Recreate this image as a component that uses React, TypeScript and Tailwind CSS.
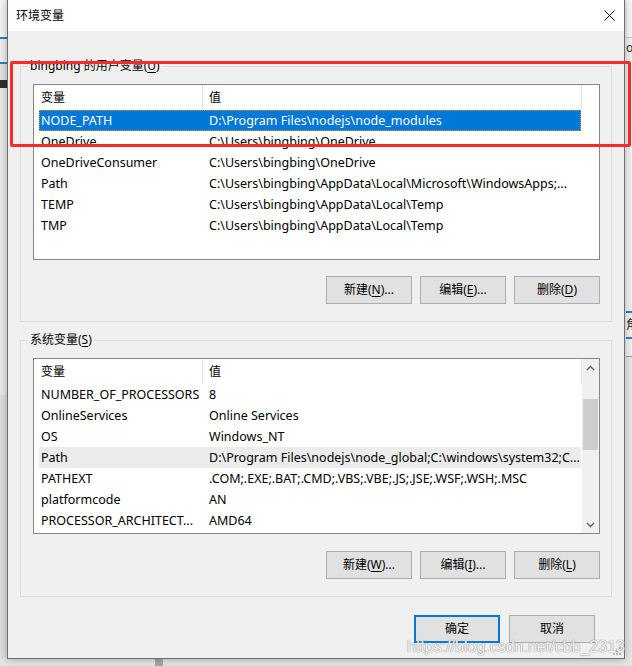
import React from "react";

type Row = [string, string];

const USER_VARS: Row[] = [
  ["NODE_PATH", "D:\\Program Files\\nodejs\\node_modules"],
  ["OneDrive", "C:\\Users\\bingbing\\OneDrive"],
  ["OneDriveConsumer", "C:\\Users\\bingbing\\OneDrive"],
  ["Path", "C:\\Users\\bingbing\\AppData\\Local\\Microsoft\\WindowsApps;..."],
  ["TEMP", "C:\\Users\\bingbing\\AppData\\Local\\Temp"],
  ["TMP", "C:\\Users\\bingbing\\AppData\\Local\\Temp"],
];

const SYS_VARS: Row[] = [
  ["NUMBER_OF_PROCESSORS", "8"],
  ["OnlineServices", "Online Services"],
  ["OS", "Windows_NT"],
  ["Path", "D:\\Program Files\\nodejs\\node_global;C:\\windows\\system32;C..."],
  ["PATHEXT", ".COM;.EXE;.BAT;.CMD;.VBS;.VBE;.JS;.JSE;.WSF;.WSH;.MSC"],
  ["platformcode", "AN"],
  ["PROCESSOR_ARCHITECT...", "AMD64"],
];

function Key({ pre, k, post }: { pre: string; k: string; post: string }) {
  return (
    <span className="whitespace-nowrap">
      {pre}
      <span className="underline underline-offset-2">{k}</span>
      {post}
    </span>
  );
}

function WinButton({ pre, k, post, primary }: { pre: string; k?: string; post?: string; primary?: boolean }) {
  return (
    <button
      className={
        "w-[86px] h-[28px] shrink-0 flex items-center justify-center bg-[#e1e1e1] text-[12px] text-black " +
        (primary ? "border-2 border-[#0078d7]" : "border border-[#adadad]")
      }
    >
      {k ? <Key pre={pre} k={k} post={post || ""} /> : pre}
    </button>
  );
}

function ListView({ rows, selected, hover, scroll }: { rows: Row[]; selected?: number; hover?: number; scroll?: boolean }) {
  return (
    <div className="h-[176px] border border-[#828790] bg-white flex overflow-hidden">
      <div className="w-[548px] shrink-0 flex flex-col">
        <div className="h-[25px] flex shrink-0 text-[12px]">
          <div className="w-[169px] border-r border-[#e5e5e5] pl-[7px] flex items-center">变量</div>
          <div className="w-[379px] border-r border-[#e5e5e5] pl-[6px] flex items-center">值</div>
        </div>
        {rows.map(([name, value], i) => (
          <div
            key={name}
            className={
              "ml-[5px] w-[542px] h-[21px] shrink-0 flex items-center pt-[1px] whitespace-nowrap " +
              (i === selected
                ? "bg-[#0078d7] text-white outline-1 outline-dotted outline-[#e08a2e] -outline-offset-1"
                : i === hover
                ? "bg-[#ececec]"
                : "")
            }
          >
            <div className="w-[170px] shrink-0 pl-[2px] pr-[2px] overflow-hidden">{name}</div>
            <div className="flex-1 min-w-0 overflow-hidden">{value}</div>
          </div>
        ))}
      </div>
      {scroll ? (
        <div className="w-[17px] shrink-0 bg-[#f0f0f0] flex flex-col">
          <div className="h-[17px] flex items-center justify-center">
            <svg width="9" height="6" viewBox="0 0 9 6">
              <polyline points="1,5 4.5,1.5 8,5" fill="none" stroke="#606060" strokeWidth="1.3" />
            </svg>
          </div>
          <div className="flex-1 flex flex-col">
            <div className="h-[23px]" />
            <div className="h-[51px] mx-[1px] bg-[#cdcdcd]" />
          </div>
          <div className="h-[17px] flex items-center justify-center">
            <svg width="9" height="6" viewBox="0 0 9 6">
              <polyline points="1,1 4.5,4.5 8,1" fill="none" stroke="#606060" strokeWidth="1.3" />
            </svg>
          </div>
        </div>
      ) : (
        <div className="flex-1" />
      )}
    </div>
  );
}

function GroupBox({
  legend,
  rows,
  selected,
  hover,
  scroll,
  buttons,
  gap,
  className,
}: {
  legend: React.ReactNode;
  rows: Row[];
  selected?: number;
  hover?: number;
  scroll?: boolean;
  buttons: [string, string, string][];
  gap: string;
  className?: string;
}) {
  return (
    <fieldset className={"border border-[#dcdcdc] " + (className || "")}>
      <legend className="ml-[7px] px-[2px] leading-[16px] text-[12px]">{legend}</legend>
      <div className="pt-[10px] pl-[12px] pr-[11px] pb-[17px] flex flex-col">
        <ListView rows={rows} selected={selected} hover={hover} scroll={scroll} />
        <div className={"flex justify-end gap-[8px] " + gap}>
          {buttons.map(([a, b, c]) => (
            <WinButton key={a} pre={a} k={b} post={c} />
          ))}
        </div>
      </div>
    </fieldset>
  );
}

export default function App() {
  return (
    <div className="w-[632px] h-[666px] relative overflow-hidden bg-[#e6e6e6] flex flex-col font-['Noto_Sans','Noto_Sans_CJK_SC',sans-serif] text-[12.5px] text-black">
      <div className="h-[659px] flex">
        {/* window behind, left edge */}
        <div className="w-[7px] shrink-0 flex flex-col bg-[#ececec]">
          <div className="h-[37px] bg-[#f4f4f4]" />
          <div className="h-[2px] bg-[#2b7fd0]" />
          <div className="h-[23px] bg-[#eeeeee]" />
          <div className="h-[2px] bg-[#2b7fd0]" />
          <div className="h-[16px] bg-[#e2e2e2]" />
          <div className="h-[8px] bg-[#2f2f2f]" />
          <div className="h-[307px] bg-[#e9e9e9]" />
          <div className="flex-1 bg-[#dedede]" />
        </div>

        {/* dialog */}
        <div className="w-[618px] shrink-0 relative flex flex-col bg-[#f0f0f0] border-x border-b border-[#6e6e6e] shadow-[0_0_8px_rgba(0,0,0,0.3)]">
          <div className="h-[31px] bg-white flex items-center justify-between pl-[8px] pr-[9px] shrink-0 text-[12px]">
            <span>环境变量</span>
            <svg width="11" height="11" viewBox="0 0 11 11">
              <path d="M0.5 0.5 L10.5 10.5 M10.5 0.5 L0.5 10.5" stroke="#111" strokeWidth="1" />
            </svg>
          </div>

          <div className="px-[12px] pt-[27px] flex flex-col">
            <GroupBox
              legend={<Key pre="bingbing 的用户变量(" k="U" post=")" />}
              rows={USER_VARS}
              selected={0}
              gap="mt-[16px]"
              buttons={[
                ["新建(", "N", ")..."],
                ["编辑(", "E", ")..."],
                ["删除(", "D", ")"],
              ]}
            />
            <GroupBox
              className="mt-[10px]"
              legend={<Key pre="系统变量(" k="S" post=")" />}
              rows={SYS_VARS}
              hover={3}
              scroll
              gap="mt-[17px]"
              buttons={[
                ["新建(", "W", ")..."],
                ["编辑(", "I", ")..."],
                ["删除(", "L", ")"],
              ]}
            />
          </div>

          <div className="mt-[18px] flex justify-end gap-[9px] pr-[29px]">
            <WinButton pre="确定" primary />
            <WinButton pre="取消" />
          </div>

          {/* resize grip */}
          <svg className="absolute right-[2px] bottom-[2px]" width="10" height="10" viewBox="0 0 10 10">
            {[
              [8, 2],
              [8, 5],
              [5, 5],
              [8, 8],
              [5, 8],
              [2, 8],
            ].map(([x, y]) => (
              <rect key={x + "-" + y} x={x - 1} y={y - 1} width="2" height="2" fill="#b8b8b8" />
            ))}
          </svg>
        </div>

        {/* window behind, right edge */}
        <div className="flex-1 min-w-0 overflow-hidden flex flex-col bg-[#f2f2f2] pl-[1px]">
          <div className="h-[37px] bg-[#f7f7f7]" />
          <div className="h-[1px] bg-[#c8c8c8]" />
          <div className="h-[20px] text-[12px] leading-[20px] overflow-hidden text-[#333]">o</div>
          <div className="h-[253px]" />
          <div className="h-[2px] bg-[#2b7fd0]" />
          <div className="h-[24px] text-[12px] leading-[24px] overflow-hidden text-[#222]">角</div>
          <div className="h-[2px] bg-[#2b7fd0]" />
          <div className="h-[17px]" />
          <div className="h-[1px] bg-[#9a9a9a]" />
          <div className="flex-1 bg-[#e8e8e8]" />
        </div>
      </div>

      {/* strip under the dialog */}
      <div className="flex-1 flex bg-[#e4e4e4]">
        <div className="w-[155px]" />
        <div className="w-[8px] bg-[#a7a7a7]" />
      </div>

      {/* red annotation box */}
      <div className="absolute left-[10px] top-[61px] w-[621px] h-[86px] border-[3px] border-[#fb2a2a] rounded-[2px] pointer-events-none" />

      {/* watermark */}
      <div className="absolute left-[407px] top-[637px] leading-[20px] text-[16px] font-['Liberation_Sans',Arial,sans-serif] text-white/90 [text-shadow:0_0_1px_#8a8a8a,0_0_1px_#8a8a8a] pointer-events-none">
        https://blog.csdn.net/cbb_2313
      </div>
    </div>
  );
}
